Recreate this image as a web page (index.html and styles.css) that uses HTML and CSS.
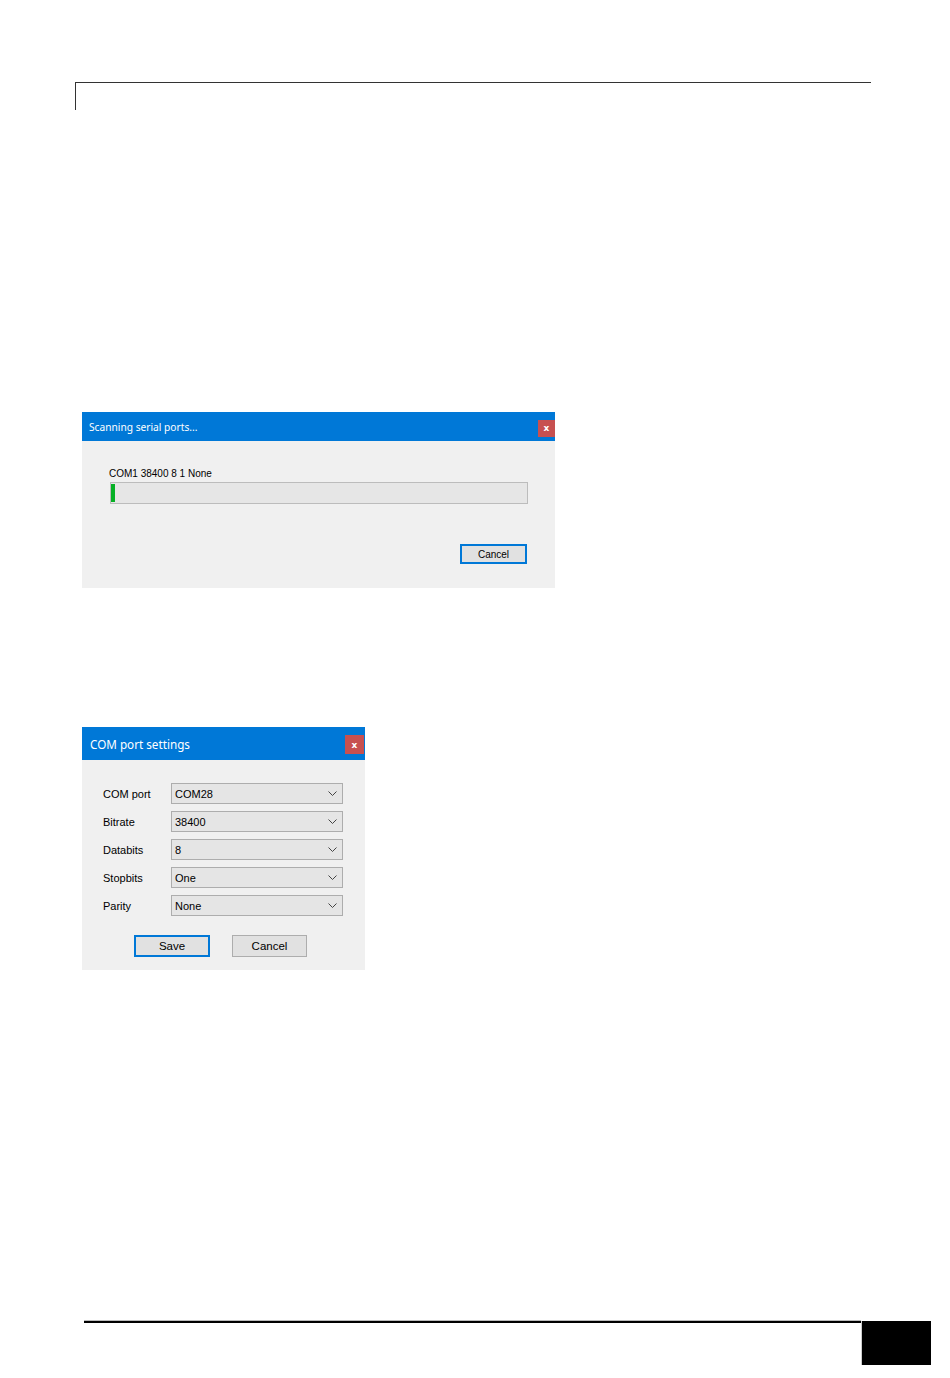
FILE: index.html
```html
<!DOCTYPE html>
<html lang="en">
<head>
    <meta charset="UTF-8">
    <meta name="viewport" content="width=device-width, initial-scale=1.0">
    <title>Serial port setup</title>
    <link rel="stylesheet" href="styles.css">
</head>
<body>
    <div class="page">
        <div class="header-rule"></div>

        <div class="dialog dialog-scan">
            <div class="titlebar">
                <span class="title">Scanning serial ports...</span>
                <span class="close">x</span>
            </div>
            <div class="dialog-body">
                <p class="status">COM1 38400 8 1 None</p>
                <div class="progress"><div class="progress-fill" style="width: 4px;"></div></div>
                <div class="scan-actions">
                    <button class="btn btn-default">Cancel</button>
                </div>
            </div>
        </div>

        <div class="dialog dialog-com">
            <div class="titlebar">
                <span class="title">COM port settings</span>
                <span class="close">x</span>
            </div>
            <div class="dialog-body">
                <div class="field">
                    <label>COM port</label>
                    <div class="combo"><span>COM28</span><svg width="9" height="5" viewBox="0 0 9 5"><path d="M0.5 0.5 L4.5 4.5 L8.5 0.5" fill="none" stroke="#444" stroke-width="1"/></svg></div>
                </div>
                <div class="field">
                    <label>Bitrate</label>
                    <div class="combo"><span>38400</span><svg width="9" height="5" viewBox="0 0 9 5"><path d="M0.5 0.5 L4.5 4.5 L8.5 0.5" fill="none" stroke="#444" stroke-width="1"/></svg></div>
                </div>
                <div class="field">
                    <label>Databits</label>
                    <div class="combo"><span>8</span><svg width="9" height="5" viewBox="0 0 9 5"><path d="M0.5 0.5 L4.5 4.5 L8.5 0.5" fill="none" stroke="#444" stroke-width="1"/></svg></div>
                </div>
                <div class="field">
                    <label>Stopbits</label>
                    <div class="combo"><span>One</span><svg width="9" height="5" viewBox="0 0 9 5"><path d="M0.5 0.5 L4.5 4.5 L8.5 0.5" fill="none" stroke="#444" stroke-width="1"/></svg></div>
                </div>
                <div class="field">
                    <label>Parity</label>
                    <div class="combo"><span>None</span><svg width="9" height="5" viewBox="0 0 9 5"><path d="M0.5 0.5 L4.5 4.5 L8.5 0.5" fill="none" stroke="#444" stroke-width="1"/></svg></div>
                </div>
                <div class="com-actions">
                    <button class="btn btn-default btn-save">Save</button>
                    <button class="btn btn-cancel">Cancel</button>
                </div>
            </div>
        </div>

        <div class="footer">
            <div class="footer-rule"></div>
            <div class="page-tab"></div>
        </div>
    </div>
</body>
</html>
```

FILE: styles.css
```css
body {
    margin: 0;
    background-color: white;
    font-family: "Liberation Sans", Arial, sans-serif;
    color: black;
}
.page {
    min-height: 1378px;
    display: flex;
    flex-direction: column;
    box-sizing: border-box;
    padding-bottom: 13px;
}
.header-rule {
    margin: 82px 0 0 75px;
    width: 796px;
    height: 28px;
    border-top: 1px solid #333;
    border-left: 1px solid #333;
    box-sizing: border-box;
}
.dialog {
    margin-left: 82px;
    background-color: #f0f0f0;
}
.dialog-scan {
    margin-top: 302px;
    width: 473px;
}
.dialog-com {
    margin-top: 139px;
    width: 283px;
}
.titlebar {
    background-color: #0078d7;
    color: white;
    display: flex;
    align-items: center;
    justify-content: space-between;
    font-family: "Noto Sans", sans-serif;
}
.dialog-scan .titlebar {
    height: 29px;
    padding-left: 7px;
}
.dialog-com .titlebar {
    height: 33px;
    padding-left: 8px;
}
.dialog-scan .title {
    font-size: 10.2px;
}
.dialog-com .title {
    font-size: 11.7px;
}
.close {
    background-color: #c75050;
    color: white;
    font-family: "DejaVu Sans", sans-serif;
    font-weight: bold;
    font-size: 9px;
    display: flex;
    align-items: center;
    justify-content: center;
}
.dialog-scan .close {
    width: 17px;
    height: 17px;
    margin-top: 3px;
}
.dialog-com .close {
    width: 19px;
    height: 19px;
    margin-right: 1px;
    margin-top: 2px;
}
.dialog-scan .dialog-body {
    height: 147px;
    padding: 27px 0 0 27px;
    box-sizing: border-box;
}
.status {
    margin: 0;
    font-size: 10px;
    line-height: 12px;
}
.progress {
    margin: 2px 0 0 1px;
    width: 418px;
    height: 22px;
    box-sizing: border-box;
    border: 1px solid #bcbcbc;
    background-color: #e6e6e6;
    padding: 1px 0;
}
.progress-fill {
    height: 100%;
    background-color: #06b025;
}
.scan-actions {
    display: flex;
    justify-content: flex-end;
    width: 418px;
    margin-top: 40px;
}
.btn {
    font-family: "Liberation Sans", Arial, sans-serif;
    background-color: #e1e1e1;
    border: 1px solid #adadad;
    color: black;
    padding: 0;
    box-sizing: border-box;
}
.btn-default {
    border: 2px solid #0078d7;
}
.scan-actions .btn {
    width: 67px;
    height: 20px;
    font-size: 10px;
}
.dialog-com .dialog-body {
    height: 210px;
    padding: 23px 0 0 21px;
    box-sizing: border-box;
}
.field {
    display: flex;
    align-items: center;
    margin-bottom: 7px;
}
.field label {
    width: 68px;
    font-size: 11px;
}
.combo {
    width: 172px;
    height: 21px;
    box-sizing: border-box;
    border: 1px solid #adadad;
    background-color: #e5e5e5;
    display: flex;
    align-items: center;
    justify-content: space-between;
    padding: 0 5px 0 3px;
    font-size: 11px;
}
.com-actions {
    display: flex;
    gap: 22px;
    margin: 19px 0 0 31px;
}
.com-actions .btn {
    height: 22px;
    font-size: 11.5px;
}
.btn-save {
    width: 76px;
}
.btn-cancel {
    width: 75px;
}
.footer {
    margin-top: auto;
    margin-left: 84px;
    margin-right: 19px;
    display: flex;
}
.footer-rule {
    flex: 1;
    height: 2px;
    border-top: 1px solid #bbb;
    background-color: black;
    background-clip: content-box;
    margin-top: -1px;
}
.page-tab {
    width: 69px;
    height: 44px;
    background-color: black;
    border-left: 1px solid #ccc;
}
```
